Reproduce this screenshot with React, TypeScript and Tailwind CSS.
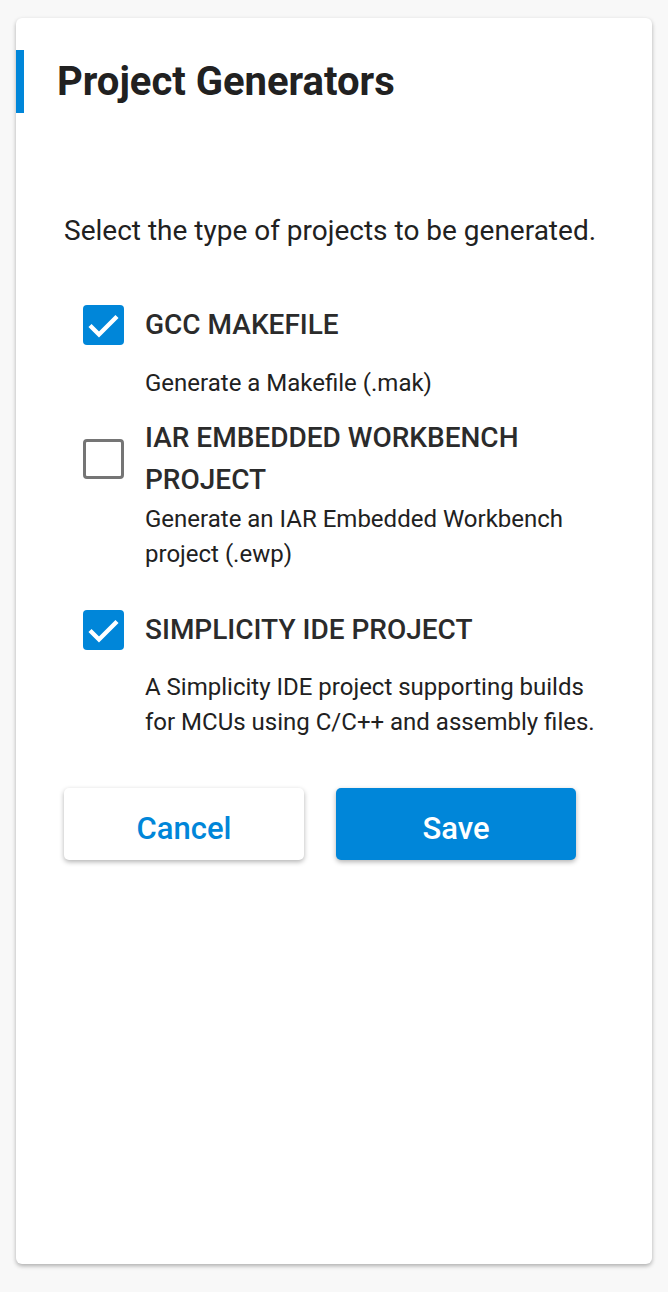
type Item = {
  label: string;
  desc: string;
  checked: boolean;
};

const items: Item[] = [
  { label: "GCC MAKEFILE", desc: "Generate a Makefile (.mak)", checked: true },
  {
    label: "IAR EMBEDDED WORKBENCH PROJECT",
    desc: "Generate an IAR Embedded Workbench project (.ewp)",
    checked: false,
  },
  {
    label: "SIMPLICITY IDE PROJECT",
    desc: "A Simplicity IDE project supporting builds for MCUs using C/C++ and assembly files.",
    checked: true,
  },
];

const CheckBox = ({ checked }: { checked: boolean }) =>
  checked ? (
    <div className="w-[41px] h-[40px] shrink-0 rounded-[4px] bg-[#0086d9]">
      <svg viewBox="0 0 41 40" className="w-[41px] h-[40px]">
        <polyline
          points="7,20.5 16,29.5 34,11.5"
          fill="none"
          stroke="white"
          strokeWidth={4.4}
        />
      </svg>
    </div>
  ) : (
    <div className="w-[41px] h-[40px] shrink-0 rounded-[4px] border-[3px] border-[#757575] bg-white" />
  );

const App = () => {
  return (
    <div
      className="min-h-screen bg-[#f8f8f8] pt-[18px] px-4 text-[#212121]"
      style={{ fontFamily: "Roboto, 'Liberation Sans', sans-serif" }}
    >
      <div className="h-[1246px] bg-white rounded-[6px] shadow-[0_2px_4px_rgba(0,0,0,0.3)]">
        <div className="pt-[32px]">
          <div className="h-[63px] border-l-[8px] border-[#0086d9] flex items-center pl-[33px]">
            <h1 className="text-[40px] font-bold leading-none">Project Generators</h1>
          </div>
        </div>

        <div className="pl-[48px]">
          <p className="mt-[102px] text-[28px] leading-[32px]">
            Select the type of projects to be generated.
          </p>

          <div className="mt-[57px]">
            {items.map((item, i) => (
              <div key={item.label} className={i === 0 ? "" : i === 1 ? "mt-[16px]" : "mt-[37px]"}>
                <div className="flex items-center gap-[21px] ml-[19px]">
                  <CheckBox checked={item.checked} />
                  <span className="text-[28px] font-medium leading-[42px] w-[420px] text-[#2b2b2b]">
                    {item.label}
                  </span>
                </div>
                <p
                  className={
                    "ml-[81px] w-[470px] text-[24px] leading-[35px] " +
                    (i === 0 ? "mt-[20px]" : i === 1 ? "mt-[1px]" : "mt-[19px]")
                  }
                >
                  {item.desc}
                </p>
              </div>
            ))}
          </div>

          <div className="mt-[48px] flex gap-[32px]">
            <button className="w-[240px] h-[72px] rounded-[5px] bg-white text-[#0086d9] text-[31px] font-medium pt-[11px] shadow-[0_2px_5px_rgba(0,0,0,0.3)]">
              Cancel
            </button>
            <button className="w-[240px] h-[72px] rounded-[5px] bg-[#0086d9] text-white text-[31px] font-medium pt-[11px] shadow-[0_2px_5px_rgba(0,0,0,0.3)]">
              Save
            </button>
          </div>
        </div>
      </div>
    </div>
  );
};

export default App;
